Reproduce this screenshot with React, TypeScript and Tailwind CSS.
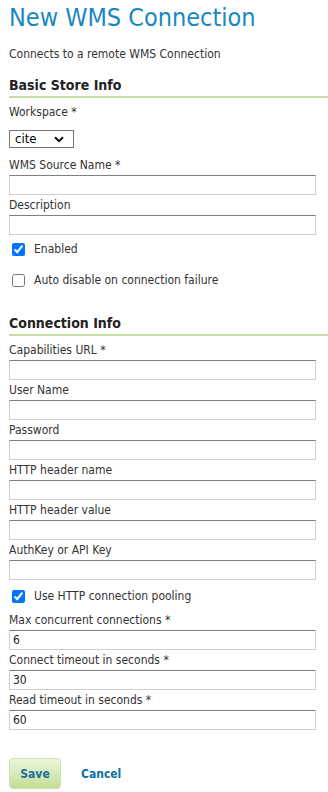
import { ReactNode } from "react";

const font = "font-['Tahoma','DejaVu_Sans_Condensed','DejaVu_Sans',sans-serif]";

function Label({ children }: { children: ReactNode }) {
  return <div className="h-[20px] text-[12px] leading-[20px] text-[#333]">{children}</div>;
}

function TextInput({ value = "" }: { value?: string }) {
  return (
    <input
      readOnly
      value={value}
      className="block h-[20px] w-[307px] border border-[#cfcfcf] border-t-[#7f7f7f] bg-white px-[3px] text-[12px] leading-[18px] text-[#222] outline-none"
    />
  );
}

function Field({ label, value }: { label: string; value?: string }) {
  return (
    <div>
      <Label>{label}</Label>
      <TextInput value={value} />
    </div>
  );
}

function Check({ label, checked }: { label: string; checked?: boolean }) {
  return (
    <label className="flex h-[20px] items-center text-[12px] text-[#333]">
      <input type="checkbox" defaultChecked={checked} className="ml-[3px] h-[13px] w-[13px]" />
      <span className="ml-[9px]">{label}</span>
    </label>
  );
}

function SectionTitle({ children }: { children: ReactNode }) {
  return (
    <div className="border-b-2 border-[#c9dca5] pb-[2px]">
      <h2 className="text-[14px] font-bold leading-[18px] text-[#222]">{children}</h2>
    </div>
  );
}

export default function App() {
  return (
    <main className={`min-h-screen w-[328px] bg-white pl-[9px] ${font}`}>
      <h1 className="pt-[2px] text-[25px] leading-[32px] text-[#1a87c2]">New WMS Connection</h1>
      <p className="mt-[13px] text-[12px] leading-[15px] text-[#333]">Connects to a remote WMS Connection</p>

      <div className="mt-[14px]">
        <SectionTitle>Basic Store Info</SectionTitle>
      </div>

      <div className="mt-[4px]">
        <Label>Workspace *</Label>
        <div className="mt-[8px] flex h-[18px] w-[65px] items-center justify-between border border-[#767676] pl-[5px] pr-[9px] text-[13px] text-black">
          <span>cite</span>
          <svg width="10" height="7" viewBox="0 0 10 7" fill="none">
            <path d="M1 1.2l4 4 4-4" stroke="#111" strokeWidth="2" />
          </svg>
        </div>
      </div>

      <div className="mt-[7px]">
        <Field label="WMS Source Name *" />
        <Field label="Description" />
      </div>

      <div className="mt-[4px]">
        <Check label="Enabled" checked />
      </div>
      <div className="mt-[11px]">
        <Check label="Auto disable on connection failure" />
      </div>

      <div className="mt-[24px]">
        <SectionTitle>Connection Info</SectionTitle>
      </div>

      <div className="mt-[4px]">
        <Field label="Capabilities URL *" />
        <Field label="User Name" />
        <Field label="Password" />
        <Field label="HTTP header name" />
        <Field label="HTTP header value" />
        <Field label="AuthKey or API Key" />
      </div>

      <div className="mt-[6px]">
        <Check label="Use HTTP connection pooling" checked />
      </div>

      <div className="mt-[4px]">
        <Field label="Max concurrent connections *" value="6" />
        <Field label="Connect timeout in seconds *" value="30" />
        <Field label="Read timeout in seconds *" value="60" />
      </div>

      <div className="mt-[28px] flex items-center">
        <button className="h-[31px] w-[52px] rounded-[4px] border border-[#cfe2ac] bg-gradient-to-b from-[#eef6df] to-[#c3dd93] text-[12px] font-bold text-[#1b6d9a]">
          Save
        </button>
        <a className="ml-[20px] text-[12px] font-bold text-[#0b6fa4]">Cancel</a>
      </div>
    </main>
  );
}
